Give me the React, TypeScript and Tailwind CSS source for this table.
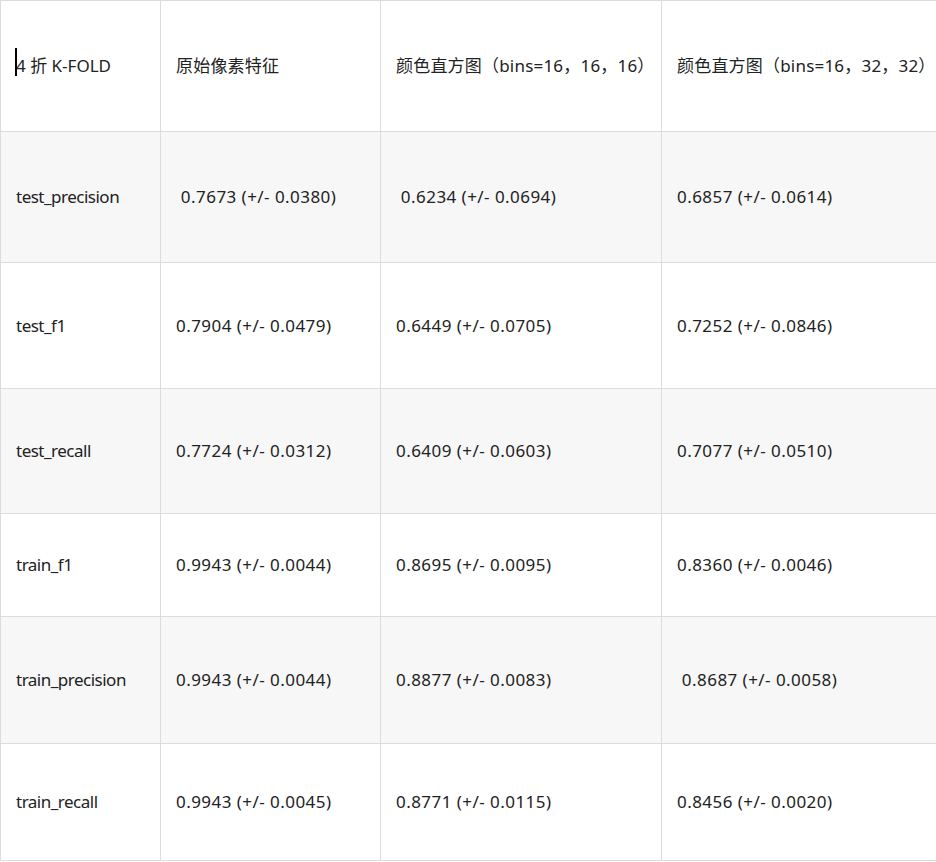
import React from 'react';

// ─── Data ────────────────────────────────────────────────────────────────────

const HEADERS = ['原始像素特征', '颜色直方图（bins=16，16，16）', '颜色直方图（bins=16，32，32）'];

const ROWS: { name: string; cells: string[]; h: string; shade: boolean }[] = [
  { name: 'test_precision', cells: [' 0.7673 (+/- 0.0380)', ' 0.6234 (+/- 0.0694)', '0.6857 (+/- 0.0614)'], h: 'h-[130px]', shade: true },
  { name: 'test_f1', cells: ['0.7904 (+/- 0.0479)', '0.6449 (+/- 0.0705)', '0.7252 (+/- 0.0846)'], h: 'h-[125px]', shade: false },
  { name: 'test_recall', cells: ['0.7724 (+/- 0.0312)', '0.6409 (+/- 0.0603)', '0.7077 (+/- 0.0510)'], h: 'h-[124px]', shade: true },
  { name: 'train_f1', cells: ['0.9943 (+/- 0.0044)', '0.8695 (+/- 0.0095)', '0.8360 (+/- 0.0046)'], h: 'h-[102px]', shade: false },
  { name: 'train_precision', cells: ['0.9943 (+/- 0.0044)', '0.8877 (+/- 0.0083)', ' 0.8687 (+/- 0.0058)'], h: 'h-[126px]', shade: true },
  { name: 'train_recall', cells: ['0.9943 (+/- 0.0045)', '0.8771 (+/- 0.0115)', '0.8456 (+/- 0.0020)'], h: 'h-[116px]', shade: false },
];

// ─── Cell ────────────────────────────────────────────────────────────────────

function Cell({
  children,
  shade,
  h,
  extra = '',
}: {
  children: React.ReactNode;
  shade: boolean;
  h: string;
  extra?: string;
}) {
  return (
    <div className={`flex items-center whitespace-pre pl-[15px] ${h} ${extra} ${shade ? 'bg-[#f7f7f7]' : 'bg-white'}`}>
      {children}
    </div>
  );
}

// ─── App ─────────────────────────────────────────────────────────────────────

export default function App() {
  return (
    <div
      className="h-[862px] w-[936px] overflow-hidden bg-white text-[17px] text-[#222] [font-family:'Noto_Sans','Noto_Sans_CJK_SC',sans-serif]"
    >
      <div className="grid w-[936px] grid-cols-[159px_219px_280px_1fr] gap-px bg-[#dcdcdc] py-px pl-px">
        {/* Header */}
        <Cell shade={false} h="h-[130px]">
          <span className="relative">
            <span className="absolute -left-px top-[-5px] h-[28px] w-[2px] bg-black" />
            4 折 K-FOLD
          </span>
        </Cell>
        {HEADERS.map((t) => (
          <Cell key={t} shade={false} h="h-[130px]" extra="tracking-[0.2px]">
            {t}
          </Cell>
        ))}

        {/* Body */}
        {ROWS.map((r) => (
          <React.Fragment key={r.name}>
            <Cell shade={r.shade} h={r.h} extra="tracking-[-0.5px]">{r.name}</Cell>
            {r.cells.map((c, i) => (
              <Cell key={i} shade={r.shade} h={r.h} extra="tracking-[0.45px]">{c}</Cell>
            ))}
          </React.Fragment>
        ))}
      </div>
    </div>
  );
}
